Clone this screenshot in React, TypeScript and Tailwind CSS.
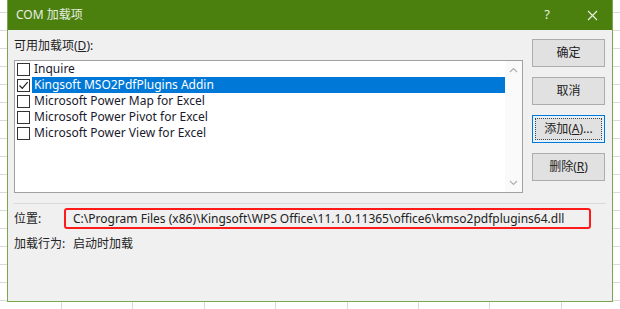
import React from 'react';

const items = [
  { name: 'Inquire', checked: false },
  { name: 'Kingsoft MSO2PdfPlugins Addin', checked: true },
  { name: 'Microsoft Power Map for Excel', checked: false },
  { name: 'Microsoft Power Pivot for Excel', checked: false },
  { name: 'Microsoft Power View for Excel', checked: false },
];

const CheckBox: React.FC<{ checked: boolean }> = ({ checked }) => (
  <div className="w-[13px] h-[13px] border border-[#333333] bg-white flex items-center justify-center shrink-0">
    {checked && (
      <svg width="11" height="11" viewBox="0 0 11 11">
        <path d="M1.5 5.5 L4.3 8.3 L9.6 2.2" fill="none" stroke="#222" strokeWidth="1.2" />
      </svg>
    )}
  </div>
);

const DlgButton: React.FC<{ label: React.ReactNode; focused?: boolean }> = ({ label, focused }) => (
  <button
    className={
      focused
        ? 'w-[73px] h-[28px] bg-[#e5f1fb] border border-[#0078d7] p-[2px] text-[12px] text-[#222]'
        : 'w-[73px] h-[28px] bg-[#e1e1e1] border border-[#adadad] text-[12px] text-[#222]'
    }
  >
    {focused ? (
      <div className="w-full h-full border border-dotted border-[#444] flex items-center justify-center bg-[#e1e1e1]">{label}</div>
    ) : (
      label
    )}
  </button>
);

export default function App() {
  return (
    <div
      className="w-[620px] h-[309px] overflow-hidden bg-white bg-[image:repeating-linear-gradient(to_bottom,transparent_0px,transparent_12px,#d9d9d9_12px,#d9d9d9_13px,transparent_13px,transparent_18px),repeating-linear-gradient(to_right,transparent_0px,transparent_61px,#d9d9d9_61px,#d9d9d9_62px,transparent_62px,transparent_71.4px)] pl-[7px]"
      style={{ fontFamily: '"Noto Sans", "Noto Sans CJK SC", sans-serif' }}
    >
      <div className="w-[606px] h-[302px] bg-[#f0f0f0] border border-t-0 border-[#7aa650] flex flex-col">
        {/* Title bar */}
        <div className="h-[30px] bg-[#4b7f0e] flex items-center pl-[8px] pr-[14px] text-[#e8efe0] text-[12px] shrink-0">
          <span>COM 加载项</span>
          <span className="ml-auto text-[13px] mr-[37px]">?</span>
          <svg width="11" height="11" viewBox="0 0 11 11">
            <path d="M1 1 L10 10 M10 1 L1 10" stroke="#e8efe0" strokeWidth="1.2" />
          </svg>
        </div>

        <div className="flex pl-[6px] pr-[7px]">
          <div className="flex flex-col w-[509px]">
            <div className="h-[30px] flex items-center pt-[2px] text-[12px] text-[#222]">
              可用加载项(<span className="underline">D</span>):
            </div>
            <div className="h-[133px] border border-[#a0a0a0] bg-white flex">
              <div className="flex-1 flex flex-col pl-[2px]">
                {items.map((it) => (
                  <div key={it.name} className="h-[16px] flex items-center">
                    <CheckBox checked={it.checked} />
                    <div
                      className={
                        it.checked
                          ? 'ml-[2px] flex-1 h-full bg-[#0078d7] text-white text-[12px] flex items-center pl-[2px]'
                          : 'ml-[2px] flex-1 h-full text-[#1a1a2e] text-[12px] flex items-center pl-[2px]'
                      }
                    >
                      {it.name}
                    </div>
                  </div>
                ))}
              </div>
              <div className="w-[17px] bg-[#fafafa] flex flex-col items-center justify-between py-[6px]">
                <svg width="9" height="6" viewBox="0 0 9 6">
                  <path d="M1 5 L4.5 1.5 L8 5" fill="none" stroke="#b0b0b0" strokeWidth="1.2" />
                </svg>
                <svg width="9" height="6" viewBox="0 0 9 6">
                  <path d="M1 1 L4.5 4.5 L8 1" fill="none" stroke="#b0b0b0" strokeWidth="1.2" />
                </svg>
              </div>
            </div>
          </div>
          <div className="ml-auto flex flex-col gap-[10px] pt-[9px]">
            <DlgButton label="确定" />
            <DlgButton label="取消" />
            <DlgButton focused label={<span>添加(<span className="underline">A</span>)...</span>} />
            <DlgButton label={<span>删除(<span className="underline">R</span>)</span>} />
          </div>
        </div>

        <div className="mt-[10px] mx-[6px] h-px bg-[#d9d9d9]" />

        <div className="flex items-center pl-[6px] mt-[4px] h-[21px] text-[12px] text-[#222]">
          <span className="w-[50px]">位置:</span>
          <div className="w-[527px] h-[21px] border-2 border-[#ff1a1a] rounded-[3px] flex items-center pl-[7px]">
            C:\Program Files (x86)\Kingsoft\WPS Office\11.1.0.11365\office6\kmso2pdfplugins64.dll
          </div>
        </div>
        <div className="flex items-center pl-[6px] mt-[5px] h-[20px] text-[12px] text-[#222]">
          <span className="w-[59px]">加载行为:</span>
          <span>启动时加载</span>
        </div>
      </div>
    </div>
  );
}
